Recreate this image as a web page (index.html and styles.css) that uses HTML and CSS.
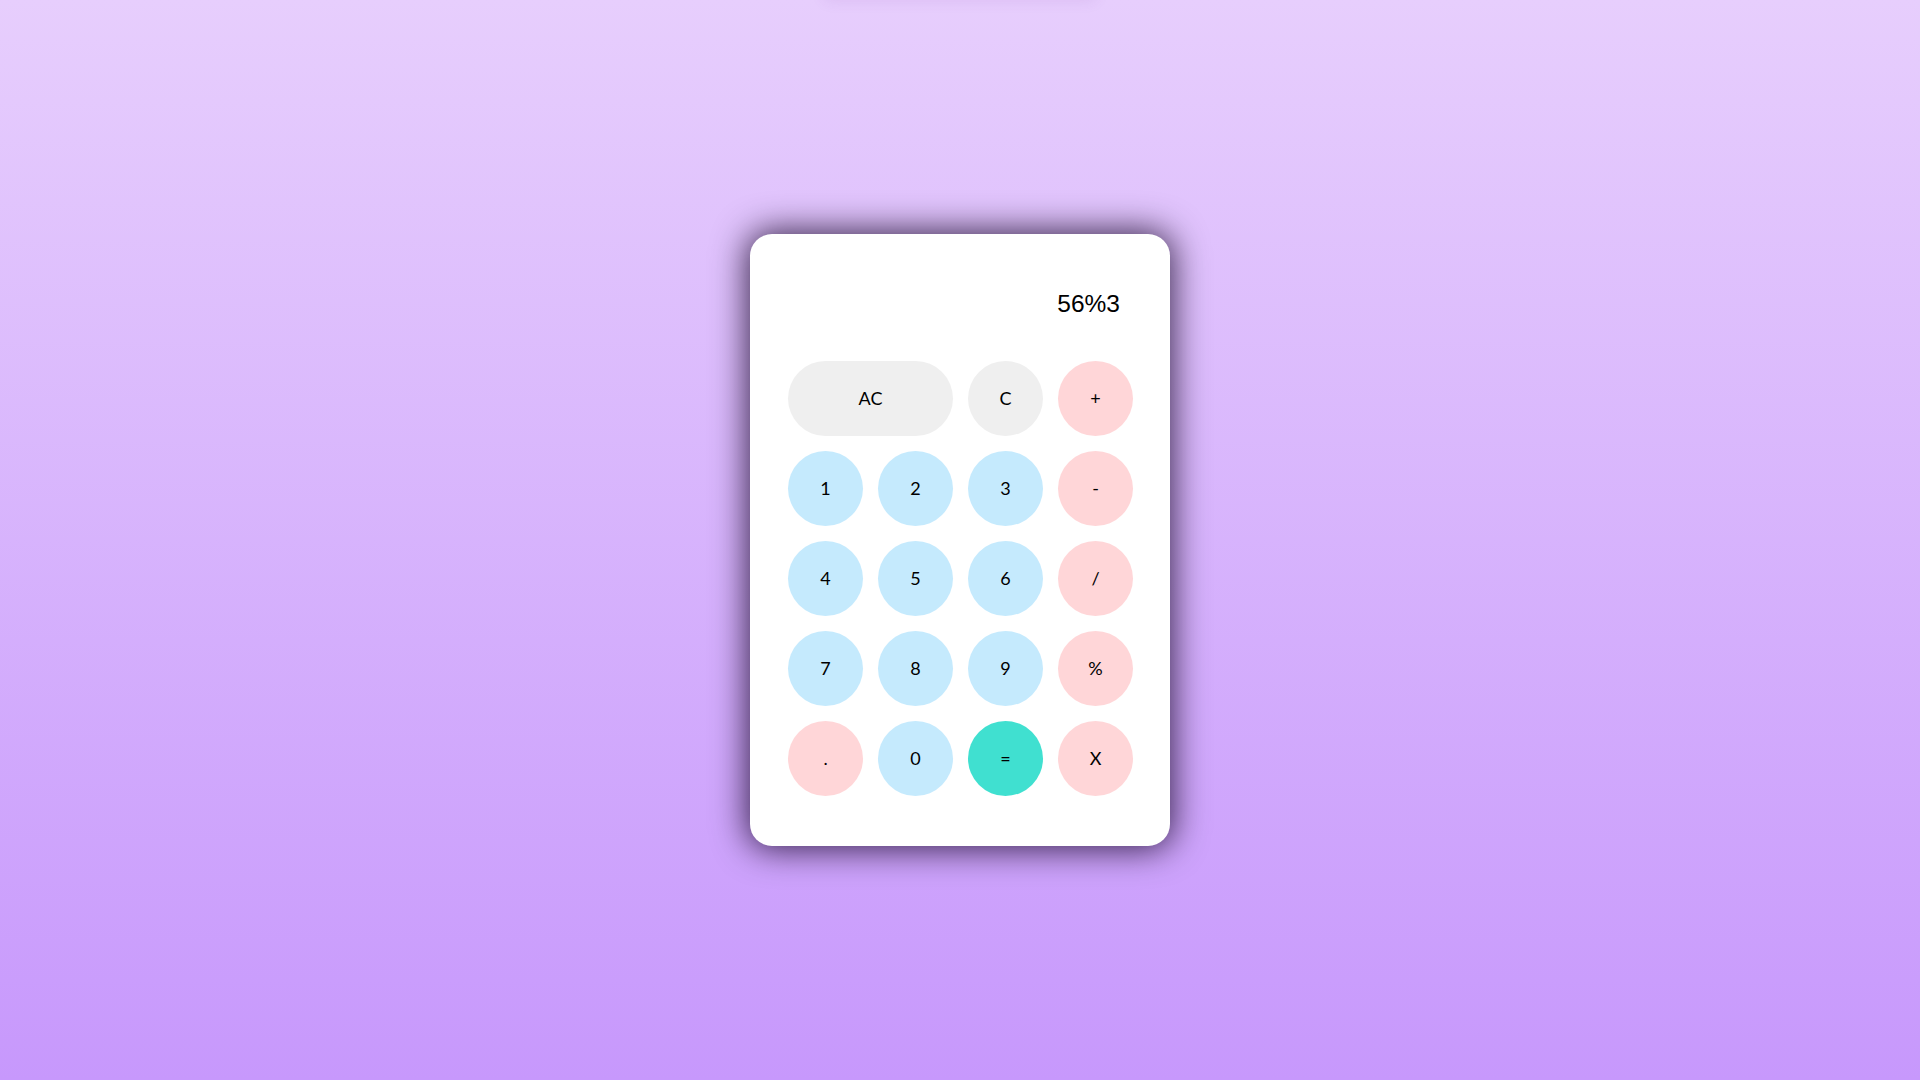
FILE: index.html
```html
<!DOCTYPE html>
<html lang="en">
<head>
<meta charset="utf-8">
<title>Calculator</title>
<link rel="stylesheet" href="styles.css">
</head>
<body>
<div class="top-ghost"></div>
<main class="stage">
  <div class="calculator">
    <div class="display">56%3</div>
    <div class="keys">
      <button class="key key-wide key-grey">AC</button>
      <button class="key key-grey">C</button>
      <button class="key key-pink">+</button>
      <button class="key key-blue">1</button>
      <button class="key key-blue">2</button>
      <button class="key key-blue">3</button>
      <button class="key key-pink">-</button>
      <button class="key key-blue">4</button>
      <button class="key key-blue">5</button>
      <button class="key key-blue">6</button>
      <button class="key key-pink">/</button>
      <button class="key key-blue">7</button>
      <button class="key key-blue">8</button>
      <button class="key key-blue">9</button>
      <button class="key key-pink">%</button>
      <button class="key key-pink">.</button>
      <button class="key key-blue">0</button>
      <button class="key key-teal">=</button>
      <button class="key key-pink">X</button>
    </div>
  </div>
</main>
</body>
</html>
```
FILE: styles.css
```css
* { box-sizing: border-box; }
html, body {
  margin: 0;
  padding: 0;
  height: 100%;
}
body {
  background: linear-gradient(180deg, #e7cefd 0%, #c798fc 100%);
  overflow: hidden;
  position: relative;
}
.top-ghost {
  position: absolute;
  top: -60px;
  left: 50%;
  width: 270px;
  height: 60px;
  margin-left: -135px;
  box-shadow: 0 0 14px rgba(120, 60, 160, 0.12);
}
.stage {
  height: 100%;
  display: flex;
  justify-content: center;
  padding-top: 234px;
}
.calculator {
  width: 420px;
  height: 612px;
  background: #ffffff;
  border-radius: 22px;
  box-shadow: 0 0 34px 3px rgba(15, 0, 30, 0.8);
  padding: 56px 37px 50px 38px;
}
.display {
  font-family: "Liberation Sans", Arial, sans-serif;
  font-size: 24.5px;
  line-height: 28px;
  height: 28px;
  text-align: right;
  padding-right: 13px;
  color: #000;
  margin-bottom: 43px;
}
.keys {
  display: grid;
  grid-template-columns: repeat(4, 75px);
  grid-auto-rows: 75px;
  gap: 15px;
}
.key {
  border: none;
  border-radius: 40px;
  font-family: Lato, "Noto Sans", sans-serif;
  font-size: 18px;
  font-weight: 400;
  color: #000;
  padding: 0 0 2px 0;
  display: flex;
  align-items: center;
  justify-content: center;
  cursor: pointer;
}
.key-wide { grid-column: span 2; }
.key-grey { background: #efefef; }
.key-pink { background: #ffd6d8; }
.key-blue { background: #c5eafd; }
.key-teal { background: #40e0d0; }
```
